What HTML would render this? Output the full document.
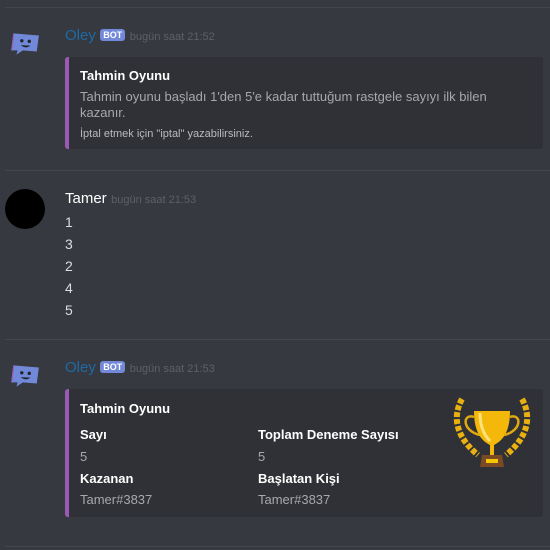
<!DOCTYPE html>
<html><head><meta charset="utf-8"><style>
body{margin:0;width:550px;height:550px;background:#36393f;font-family:"Liberation Sans","DejaVu Sans",sans-serif;position:relative;overflow:hidden;color:#dcddde}
.a{position:absolute;white-space:nowrap}
.sep{position:absolute;left:5px;right:0;height:1px;background:#42454a}
.emb{position:absolute;left:65px;width:478px;background:#2f3136;border-left:4px solid #9b59b6;border-radius:3px;box-sizing:border-box}
.name{font-size:15px;color:#1f6aa5}
.bot{display:inline-block;background:#7289da;color:#fff;font-size:9px;font-weight:bold;padding:1px 3px;border-radius:3px;vertical-align:2px}
.ts{font-size:11px;color:#5d6066}
.b{font-weight:bold;color:#fff;font-size:13px}
.g{color:#a6a8ab;font-size:13px}
</style></head><body>
<div class="sep" style="top:7px"></div>
<div class="sep" style="top:170px"></div>
<div class="sep" style="top:339px"></div>
<div class="sep" style="top:546px"></div>

<svg class="a" style="left:9px;top:31px" width="32" height="26" viewBox="0 0 30 24"><path d="M4 2 L28 4 L26 19 L13 18 L7 22 L8 18 L2 18 Z" fill="#7289da"/><path d="M2 18 L4 2 L5 2 L3 18Z" fill="#9b59b6"/><circle cx="12" cy="9" r="1.6" fill="#23272a"/><circle cx="19" cy="9.5" r="1.6" fill="#23272a"/><path d="M11 13 Q16 17 20 13.5Z" fill="#23272a"/></svg>
<div class="a" style="left:65px;top:27px"><span class="name">Oley</span> <span class="bot">BOT</span> <span class="ts">bugün saat 21:52</span></div>
<div class="emb" style="top:57px;height:92px">
<div class="a b" style="left:11px;top:11px">Tahmin Oyunu</div>
<div class="a g" style="left:11px;top:32px;white-space:normal;width:440px;line-height:16px">Tahmin oyunu başladı 1'den 5'e kadar tuttuğum rastgele sayıyı ilk bilen kazanır.</div>
<div class="a" style="left:11px;top:71px;font-size:11px;color:#b9bbbe">İptal etmek için "iptal" yazabilirsiniz.</div>
</div>

<div class="a" style="left:5px;top:189px;width:40px;height:40px;border-radius:50%;background:#000"></div>
<div class="a" style="left:65px;top:190px"><span style="font-size:15px;color:#fff">Tamer</span> <span class="ts">bugün saat 21:53</span></div>
<div class="a" style="left:65px;top:211px;font-size:14px;line-height:22px;color:#dcddde">1<br>3<br>2<br>4<br>5</div>

<svg class="a" style="left:9px;top:363px" width="32" height="26" viewBox="0 0 30 24"><path d="M4 2 L28 4 L26 19 L13 18 L7 22 L8 18 L2 18 Z" fill="#7289da"/><path d="M2 18 L4 2 L5 2 L3 18Z" fill="#9b59b6"/><circle cx="12" cy="9" r="1.6" fill="#23272a"/><circle cx="19" cy="9.5" r="1.6" fill="#23272a"/><path d="M11 13 Q16 17 20 13.5Z" fill="#23272a"/></svg>
<div class="a" style="left:65px;top:359px"><span class="name">Oley</span> <span class="bot">BOT</span> <span class="ts">bugün saat 21:53</span></div>
<div class="emb" style="top:389px;height:128px">
<div class="a b" style="left:11px;top:12px">Tahmin Oyunu</div>
<div class="a b" style="left:11px;top:38px">Sayı</div>
<div class="a g" style="left:11px;top:60px">5</div>
<div class="a b" style="left:11px;top:82px">Kazanan</div>
<div class="a g" style="left:11px;top:103px">Tamer#3837</div>
<div class="a b" style="left:189px;top:38px">Toplam Deneme Sayısı</div>
<div class="a g" style="left:189px;top:60px">5</div>
<div class="a b" style="left:189px;top:82px">Başlatan Kişi</div>
<div class="a g" style="left:189px;top:103px">Tamer#3837</div>
<svg class="a" style="left:381px;top:8px" width="84" height="76" viewBox="0 0 84 76">
<path d="M12 2 C2 20 6 40 28 58" stroke="#e8b010" stroke-width="6" fill="none" stroke-dasharray="5 2"/>
<path d="M72 2 C82 20 78 40 56 58" stroke="#e8b010" stroke-width="6" fill="none" stroke-dasharray="5 2"/>
<path d="M24 14 H60 C60 36 52 44 44 48 V58 H40 V48 C32 44 24 36 24 14Z" fill="#f4b80a"/>
<path d="M30 16 C30 32 36 40 40 44" stroke="#ffe27a" stroke-width="3" fill="none"/>
<path d="M24 20 C12 16 12 34 30 38 M60 20 C72 16 72 34 54 38" stroke="#e0a810" stroke-width="2.5" fill="none"/>
<path d="M32 58 H52 L54 70 H30Z" fill="#7a4a24"/>
<rect x="36" y="62" width="12" height="4" fill="#f7c600"/>
</svg>
</div>
</body></html>
